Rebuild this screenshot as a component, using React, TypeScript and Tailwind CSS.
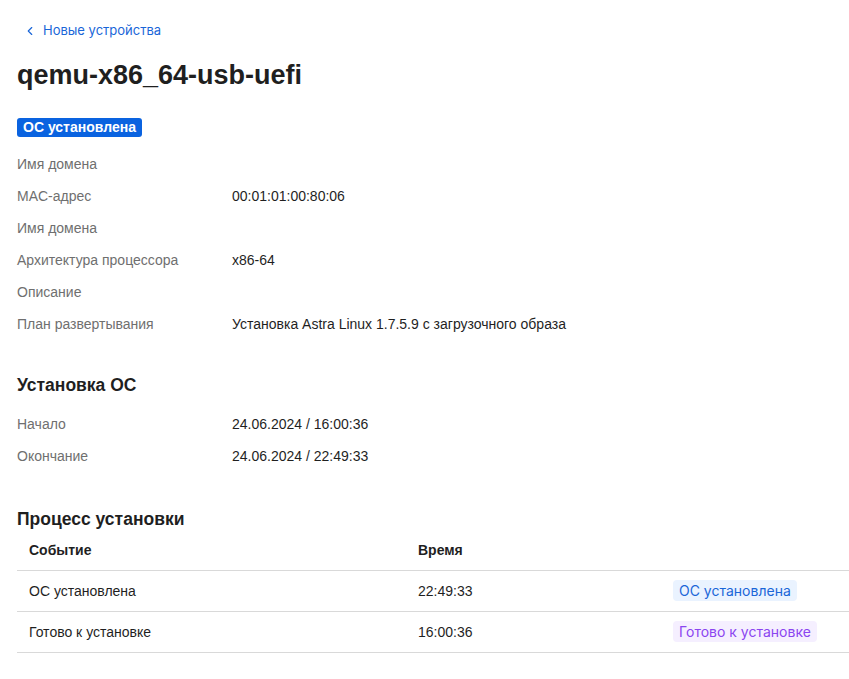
import { ChevronLeft } from "lucide-react";

const INFO = [
  { label: "Имя домена", value: "" },
  { label: "MAC-адрес", value: "00:01:01:00:80:06" },
  { label: "Имя домена", value: "" },
  { label: "Архитектура процессора", value: "x86-64" },
  { label: "Описание", value: "" },
  { label: "План развертывания", value: "Установка Astra Linux 1.7.5.9 с загрузочного образа" },
];

const INSTALL = [
  { label: "Начало", value: "24.06.2024 / 16:00:36" },
  { label: "Окончание", value: "24.06.2024 / 22:49:33" },
];

const EVENTS = [
  { name: "ОС установлена", time: "22:49:33", tone: "blue" },
  { name: "Готово к установке", time: "16:00:36", tone: "purple" },
];

function Row({ label, value }: { label: string; value: string }) {
  return (
    <div className="flex h-8 items-center text-sm">
      <span className="w-[215px] text-[#6f6f6f]">{label}</span>
      <span className="text-[#1f1f1f]">{value}</span>
    </div>
  );
}

export default function App() {
  return (
    <div className="min-h-screen bg-white pl-[17px] font-['Liberation_Sans',Arial,sans-serif] text-[#1f1f1f]">
      <a className="flex items-center gap-[6px] pt-[21px] pl-[6px] font-['Inter',sans-serif] text-[13px] text-[#1a66d8]">
        <ChevronLeft size={14} strokeWidth={2} />
        <span>Новые устройства</span>
      </a>

      <h1 className="mt-[18px] text-[27px] leading-8 font-bold text-[#1f1f1f]">qemu-x86_64-usb-uefi</h1>

      <div className="mt-[27px] flex">
        <span className="rounded-[3px] bg-[#0a63e0] px-[6px] text-sm leading-[19px] font-bold text-white">
          ОС установлена
        </span>
      </div>

      <div className="mt-[11px]">
        {INFO.map((r, i) => (
          <Row key={i} {...r} />
        ))}
      </div>

      <h2 className="mt-[33px] text-[17.5px] leading-6 font-bold">Установка ОС</h2>
      <div className="mt-[11px]">
        {INSTALL.map((r, i) => (
          <Row key={i} {...r} />
        ))}
      </div>

      <h2 className="mt-[35px] text-[17.5px] leading-6 font-bold">Процесс установки</h2>
      <table className="w-full border-collapse text-sm">
        <thead>
          <tr className="h-[40px] border-b border-[#d9d9d9] text-left">
            <th className="w-[401px] pl-3 font-bold">Событие</th>
            <th className="w-[255px] font-bold">Время</th>
            <th />
          </tr>
        </thead>
        <tbody>
          {EVENTS.map((e) => (
            <tr key={e.name} className="h-[41px] border-b border-[#d9d9d9]">
              <td className="pl-3">{e.name}</td>
              <td>{e.time}</td>
              <td>
                <span
                  className={
                    e.tone === "blue"
                      ? "rounded-[4px] bg-[#eaf3ff] px-[6px] py-[2px] font-['Inter',sans-serif] text-[#1a66d8]"
                      : "rounded-[4px] bg-[#f5efff] px-[6px] py-[2px] font-['Inter',sans-serif] text-[#8b45f0]"
                  }
                >
                  {e.name}
                </span>
              </td>
            </tr>
          ))}
        </tbody>
      </table>
    </div>
  );
}
